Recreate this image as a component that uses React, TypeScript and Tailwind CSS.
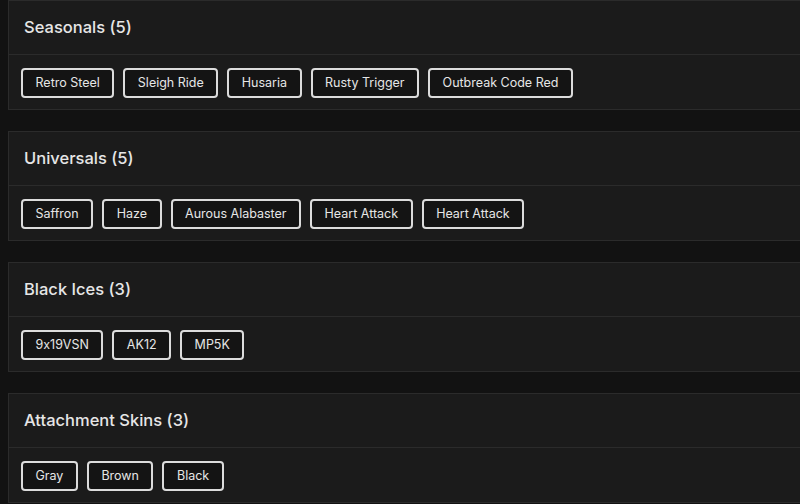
import React from "react";

const groups = [
  { title: "Seasonals (5)", items: ["Retro Steel", "Sleigh Ride", "Husaria", "Rusty Trigger", "Outbreak Code Red"] },
  { title: "Universals (5)", items: ["Saffron", "Haze", "Aurous Alabaster", "Heart Attack", "Heart Attack"] },
  { title: "Black Ices (3)", items: ["9x19VSN", "AK12", "MP5K"] },
  { title: "Attachment Skins (3)", items: ["Gray", "Brown", "Black"] },
];

export default function App() {
  return (
    <div
      className="min-h-[504px] w-[800px] overflow-hidden bg-[#121212] pl-[8px] flex flex-col gap-[21px] [font-feature-settings:'calt'_0]"
      style={{ fontFamily: "Inter, 'Noto Sans', sans-serif" }}
    >
      {groups.map((g, i) => (
        <div key={i} className="w-[820px] h-[110px] shrink-0 border border-[#2b2b2b] bg-[#1b1b1b] flex flex-col">
          <div className="h-[54px] shrink-0 flex items-center pl-[15px] border-b border-[#2b2b2b] text-[16.5px] font-medium text-[#e6e6e6]">
            {g.title}
          </div>
          <div className="flex-1 flex items-center gap-[9px] pl-[12px] pt-[2px]">
            {g.items.map((it, j) => (
              <div
                key={j}
                className="h-[30px] px-[12.5px] flex items-center rounded-[4px] border-2 border-[#dcdcdc] bg-[#141414] text-[12.5px] text-[#e6e6e6]"
              >
                {it}
              </div>
            ))}
          </div>
        </div>
      ))}
    </div>
  );
}
